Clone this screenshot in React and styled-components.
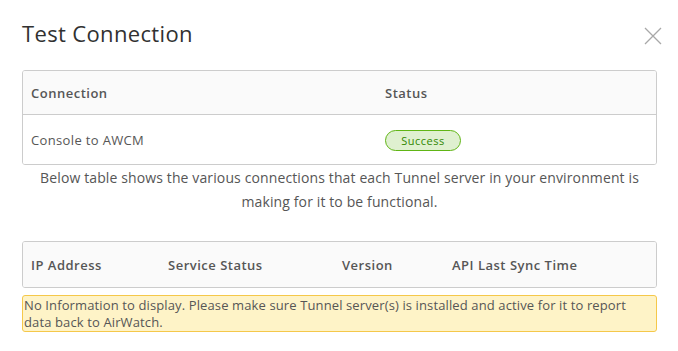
import styled, { createGlobalStyle } from "styled-components";

const GlobalStyle = createGlobalStyle`
  body {
    margin: 0;
    background: #fff;
    font-family: "Open Sans", "Liberation Sans", sans-serif;
    color: #565656;
  }
`;

const Modal = styled.div`
  width: 678px;
  height: 351px;
  padding: 17px 16px 0 22px;
  box-sizing: border-box;
  overflow: hidden;
`;

const Header = styled.div`
  display: flex;
  justify-content: space-between;
  align-items: flex-start;
  height: 53px;
`;

const Title = styled.h3`
  margin: 0;
  font-size: 22px;
  font-weight: 400;
  line-height: 32px;
  color: #313131;
  letter-spacing: 0.35px;
`;

const CloseButton = styled.button`
  border: none;
  background: none;
  padding: 0;
  margin: 10px 0 0 0;
  width: 18px;
  height: 18px;
  cursor: pointer;
  display: flex;
`;

const Grid = styled.div`
  margin-right: 5px;
  border: 1px solid #ccc;
  border-radius: 3px;
  overflow: hidden;
`;

const Row = styled.div`
  display: grid;
  grid-template-columns: ${(p) => p.$cols};
  align-items: center;
  height: ${(p) => p.$height}px;
  padding-left: 8px;
  background: ${(p) => (p.$head ? "#fafafa" : "#fff")};
  border-bottom: ${(p) => (p.$head && p.$divider ? "1px solid #ccc" : "none")};
  box-sizing: border-box;
`;

const HeadCell = styled.div`
  font-size: 13px;
  font-weight: 600;
  letter-spacing: 0.5px;
  color: #565656;
`;

const Cell = styled.div`
  font-size: 13px;
  letter-spacing: 0.35px;
  color: #565656;
`;

const Badge = styled.span`
  display: inline-flex;
  align-items: center;
  justify-content: center;
  width: 76px;
  height: 21px;
  box-sizing: border-box;
  border: 1px solid #60b515;
  border-radius: 11px;
  background: #dff0d0;
  color: #318700;
  font-size: 11px;
  letter-spacing: 0.5px;
`;

const Description = styled.p`
  margin: 0 5px 0 0;
  padding: 1px 0 0;
  text-align: center;
  font-size: 14px;
  line-height: 24px;
  letter-spacing: 0.12px;
  color: #565656;
  height: 75px;
`;

const Alert = styled.div`
  margin: 7px 5px 0 0;
  border: 1px solid #f5c84a;
  border-radius: 3px;
  background: #fef3c7;
  padding: 1px 20px 0 1px;
  font-size: 13px;
  line-height: 17px;
  letter-spacing: 0.12px;
  color: #565656;
`;

function CloseIcon() {
  return (
    <svg width="18" height="18" viewBox="0 0 18 18">
      <path d="M1 1 L17 17 M17 1 L1 17" stroke="#a8a8a8" strokeWidth="1.3" fill="none" />
    </svg>
  );
}

function App() {
  const tunnelCols = ["IP Address", "Service Status", "Version", "API Last Sync Time"];

  return (
    <Modal>
      <GlobalStyle />
      <Header>
        <Title>Test Connection</Title>
        <CloseButton aria-label="Close">
          <CloseIcon />
        </CloseButton>
      </Header>
      <Grid>
        <Row $head $divider $cols="354px 1fr" $height={44}>
          <HeadCell>Connection</HeadCell>
          <HeadCell>Status</HeadCell>
        </Row>
        <Row $cols="354px 1fr" $height={49}>
          <Cell>Console to AWCM</Cell>
          <div>
            <Badge>Success</Badge>
          </div>
        </Row>
      </Grid>
      <Description>
        Below table shows the various connections that each Tunnel server in your environment is
        <br />
        making for it to be functional.
      </Description>
      <Grid>
        <Row $head $cols="137px 174px 110px 1fr" $height={45}>
          {tunnelCols.map((c) => (
            <HeadCell key={c}>{c}</HeadCell>
          ))}
        </Row>
      </Grid>
      <Alert>
        No Information to display. Please make sure Tunnel server(s) is installed and active for it to report
        data back to AirWatch.
      </Alert>
    </Modal>
  );
}

export default App;
